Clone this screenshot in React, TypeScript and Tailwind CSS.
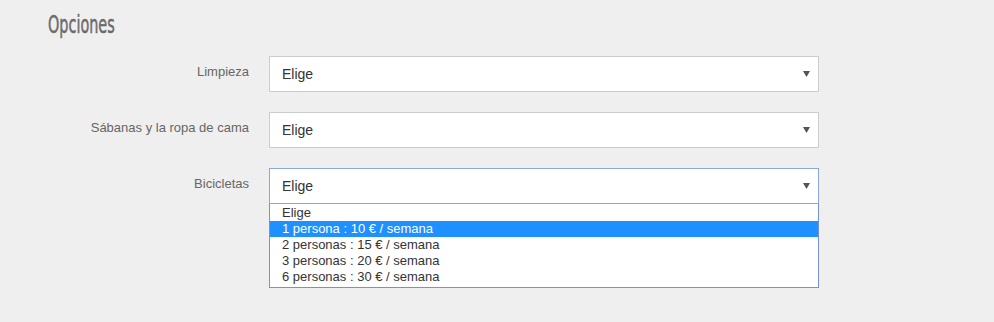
import { useState } from "react"

const options = [
  "Elige",
  "1 persona : 10 € / semana",
  "2 personas : 15 € / semana",
  "3 personas : 20 € / semana",
  "6 personas : 30 € / semana",
]

function Arrow() {
  return (
    <svg width="7" height="6" viewBox="0 0 7 6" className="absolute right-[8px] top-1/2 -translate-y-1/2">
      <path d="M0 0h7L3.5 6z" fill="#555" />
    </svg>
  )
}

function Row({ label, open }: { label: string; open?: boolean }) {
  const [hover] = useState(1)
  return (
    <div className="flex items-start">
      <div className="w-[249px] shrink-0 pt-[7px] text-right text-[13px] leading-[18px] text-[#666]">{label}</div>
      <div className="relative ml-[20px] w-[550px]">
        <div
          className={`relative flex h-[36px] items-center border bg-white pl-[12px] text-[14px] text-[#333] ${
            open ? "border-[#88a6e0]" : "border-[#ccc]"
          }`}
        >
          Elige
          <Arrow />
        </div>
        {open && (
          <ul className="absolute left-0 top-[36px] w-[550px] border border-t-0 border-[#7394d4] bg-white pb-[2px] text-[13px] leading-[16px] text-[#333]">
            {options.map((o, i) => (
              <li
                key={o}
                className={`pl-[12px] ${i === hover ? "bg-[#1e90ff] text-white" : ""} ${i === 0 ? "pt-[1px]" : ""}`}
              >
                {o}
              </li>
            ))}
          </ul>
        )}
      </div>
    </div>
  )
}

export default function App() {
  return (
    <div className="min-h-[322px] bg-[#efefef] font-['Liberation_Sans',Arial,sans-serif]">
      <h2 className="h-[39px] px-[48px] pt-[12px]">
        <span className="inline-block origin-left scale-x-[0.6] text-[24px] leading-[26px] font-normal text-[#6a6a6a] font-['DejaVu_Sans',sans-serif] [-webkit-text-stroke:0.5px_#6a6a6a]">
          Opciones
        </span>
      </h2>
      <div className="mt-[17px] flex flex-col gap-[20px]">
        <Row label="Limpieza" />
        <Row label="Sábanas y la ropa de cama" />
        <Row label="Bicicletas" open />
      </div>
    </div>
  )
}
